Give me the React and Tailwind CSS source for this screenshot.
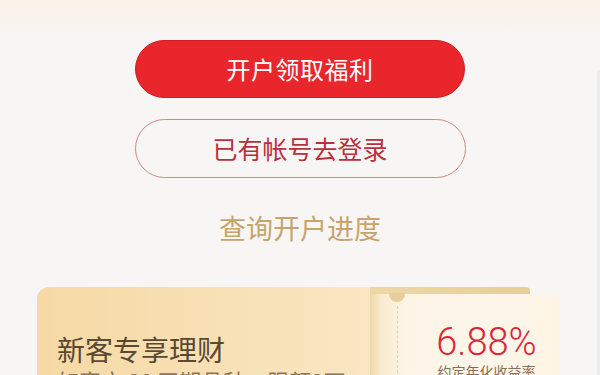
import React from "react";

export default function App() {
  const cjk = "font-['Noto_Sans_CJK_SC','Noto_Sans',sans-serif]";
  return (
    <div className={`relative w-[600px] h-[375px] overflow-hidden bg-[#f7f6f5] ${cjk}`}>
      <div className="absolute right-0 top-[70px] bottom-0 w-[3px] bg-[#ecebeb]" />
      <div className="h-[40px] bg-[linear-gradient(180deg,#faf1e8_0%,#f9f3ee_50%,#f7f6f5_100%)]" />
      <div className="flex flex-col items-center">
        <div className="w-[330px] h-[58px] rounded-full bg-[#e8262b] border border-[#d01f24] flex items-center justify-center text-white text-[24px] leading-none tracking-[0.5px]">
          开户领取福利
        </div>
        <div className="mt-[21px] w-[331px] h-[59px] rounded-full border-[1.5px] border-[#dc8188] flex items-center justify-center text-[#b9303d] text-[25px] leading-none">
          已有帐号去登录
        </div>
        <div className="mt-[31px] h-[36px] flex items-center text-[27px] leading-none text-[#c6a46b]">
          查询开户进度
        </div>
      </div>
      <div className="mt-[42px] ml-[37px] w-[523px] h-[130px] flex">
        <div className="flex-1 rounded-l-[12px] rounded-tr-[4px] bg-[linear-gradient(90deg,#f6d9a5_0%,#f8e1b6_55%,#f9e6c3_100%)] pl-[20px] pt-[48px]">
          <div className="h-[28px] text-[28px] leading-none text-[#5b4833]">新客专享理财</div>
          <div className="mt-[6px] text-[22px] leading-none text-[#8a7559] whitespace-nowrap">
            如客户 30 天期品种，限额3万
          </div>
        </div>
        <div className="relative w-[190px] -ml-[10px] flex flex-col">
          <div className="h-[7px] w-[160px] rounded-tr-[4px] bg-[linear-gradient(90deg,#edd7a7_0%,#e6cf9b_100%)]" />
          <div className="relative flex-1 rounded-tr-[8px] bg-[linear-gradient(90deg,#f0d7a8_0%,#f9ead0_6%,#fdf4e6_18%,#fdf6ea_60%,#fdf4e4_100%)] flex">
            <div className="absolute left-[19px] -top-[1px] w-[16px] h-[9px] rounded-b-full bg-[#e6cf9b]" />
            <div className="absolute left-[27px] top-[12px] bottom-0 border-l-[1.5px] border-dashed border-[#e6d4b6]" />
            <div className="w-[27px]" />
            <div className="flex-1 pl-[16px] flex flex-col items-center pt-[30px]">
              <div className="h-[36px] text-[38px] leading-[36px] font-light text-[#d8283a] font-['Roboto',sans-serif]">
                6.88%
              </div>
              <div className="mt-[4px] text-[14px] leading-none text-[#8a6d55] whitespace-nowrap">
                约定年化收益率
              </div>
            </div>
          </div>
        </div>
      </div>
    </div>
  );
}
